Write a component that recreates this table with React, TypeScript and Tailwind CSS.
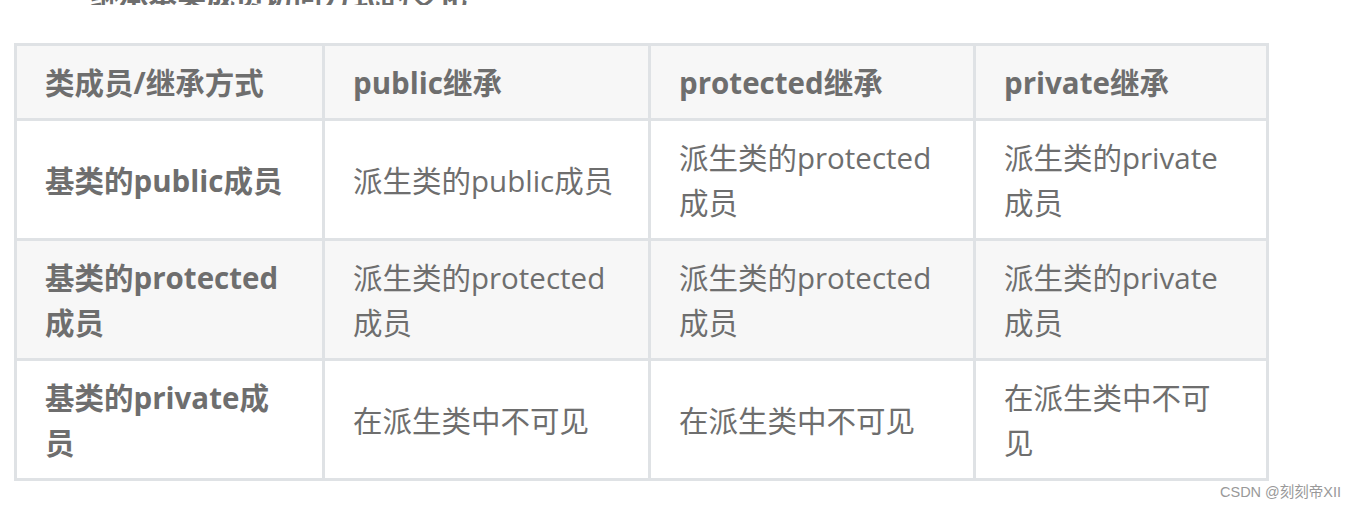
import React from "react";

const rows: { head: string; cells: string[] }[] = [
  { head: "基类的public成员", cells: ["派生类的public成员", "派生类的protected成员", "派生类的private成员"] },
  { head: "基类的protected成员", cells: ["派生类的protected成员", "派生类的protected成员", "派生类的private成员"] },
  { head: "基类的private成员", cells: ["在派生类中不可见", "在派生类中不可见", "在派生类中不可见"] },
];

const headers = ["类成员/继承方式", "public继承", "protected继承", "private继承"];

export default function App() {
  return (
    <div className="relative w-[1357px] h-[510px] bg-white overflow-hidden font-['Open_Sans','Noto_Sans_CJK_SC',sans-serif] text-[#6e6e6e]">
      <div className="h-[5px] overflow-hidden flex items-end pl-[82px]">
        <div className="text-[29px] font-bold leading-[29px] whitespace-nowrap translate-y-[5px]">
          ·继承基类成员访问方式的变化
        </div>
      </div>
      <div className="pl-[14px] pt-[38px]">
        <table className="table-fixed border-collapse w-[1253px] text-[29.5px] leading-[45px]">
          <colgroup>
            <col className="w-[308px]" />
            <col className="w-[326px]" />
            <col className="w-[325px]" />
            <col className="w-[293px]" />
          </colgroup>
          <thead>
            <tr className="bg-[#f7f7f7]">
              {headers.map((h) => (
                <th
                  key={h}
                  className="border-[3px] border-[#dfe2e5] px-[28px] pt-[14px] pb-[13px] text-left font-bold align-middle"
                >
                  {h}
                </th>
              ))}
            </tr>
          </thead>
          <tbody>
            {rows.map((r, i) => (
              <tr key={r.head} className={i % 2 === 1 ? "bg-[#f7f7f7]" : "bg-white"}>
                <td className="border-[3px] border-[#dfe2e5] px-[28px] pt-[14px] pb-[13px] font-bold align-middle">
                  {r.head}
                </td>
                {r.cells.map((c, j) => (
                  <td
                    key={j}
                    className="border-[3px] border-[#dfe2e5] px-[28px] pt-[14px] pb-[13px] align-middle"
                  >
                    {c}
                  </td>
                ))}
              </tr>
            ))}
          </tbody>
        </table>
      </div>
      <div className="absolute left-[1220px] top-[483px] text-[14.5px] leading-[18px] text-[#999] font-['Liberation_Sans','Noto_Sans_CJK_SC',sans-serif] whitespace-nowrap">
        CSDN @刻刻帝XII
      </div>
    </div>
  );
}
